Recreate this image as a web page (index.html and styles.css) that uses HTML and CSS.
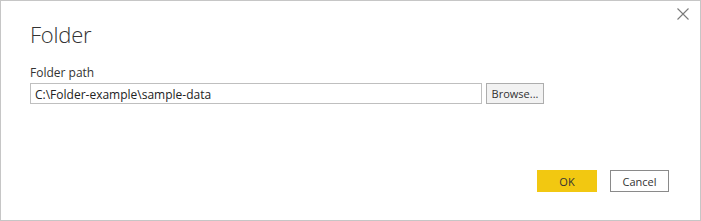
FILE: index.html
```html
<!DOCTYPE html>
<html>
<head>
<meta charset="utf-8">
<link rel="stylesheet" href="styles.css">
</head>
<body>
<div class="dialog">
  <button class="close" aria-label="Close">
    <svg width="12" height="12" viewBox="0 0 12 12"><path d="M0.5 0.5 L11.5 11.5 M11.5 0.5 L0.5 11.5" stroke="#7a7a7a" stroke-width="1.1" fill="none"/></svg>
  </button>
  <h1 class="title">Folder</h1>
  <label class="label">Folder path</label>
  <div class="row">
    <div class="input">C:\Folder-example\sample-data</div>
    <button class="browse">Browse...</button>
  </div>
  <div class="actions">
    <button class="btn ok">OK</button>
    <button class="btn cancel">Cancel</button>
  </div>
</div>
</body>
</html>
```
FILE: styles.css
```css
html, body { margin: 0; padding: 0; background: #fff; }
body { font-family: "Open Sans", "Noto Sans", sans-serif; }
.dialog {
  position: relative;
  width: 701px; height: 221px;
  box-sizing: border-box;
  border: 1px solid #c6c6c6;
  padding: 0 0 0 29px;
}
.close {
  position: absolute; top: 7px; right: 11px;
  border: 0; background: none; padding: 0; width: 12px; height: 12px; line-height: 0;
}
.title {
  margin: 0; padding-top: 18px;
  font-weight: 300; font-size: 22px; line-height: 30px; color: #333;
  letter-spacing: -0.2px;
}
.label {
  display: block; margin-top: 16px;
  font-size: 12px; line-height: 16px; color: #333;
}
.row { display: flex; gap: 4px; margin-top: 2px; }
.input {
  width: 452px; height: 21px; box-sizing: border-box;
  border: 1px solid #bfbfbf; padding: 1px 4px 0;
  font-size: 12px; line-height: 19px; color: #222;
}
.browse {
  width: 58px; height: 21px; box-sizing: border-box;
  border: 1px solid #adadad; background: #f2f2f2;
  font-family: inherit; font-size: 11px; color: #333; padding: 0;
}
.actions { display: flex; gap: 13px; margin-top: 66px; padding-left: 507px; }
.btn {
  width: 60px; height: 22px; box-sizing: border-box; padding: 0;
  font-family: inherit; font-size: 11px; color: #333;
}
.ok { background: #f2c811; border: 0; }
.cancel { background: #fff; border: 1px solid #8a8a8a; width: 59px; }
```
